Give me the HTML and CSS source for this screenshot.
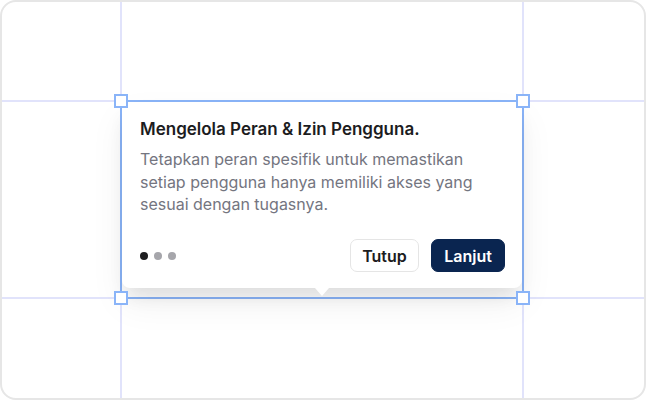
FILE: index.html
```html
<!DOCTYPE html>
<html lang="id">
<head>
<meta charset="utf-8">
<link rel="stylesheet" href="styles.css">
</head>
<body>
<div class="frame">
  <div class="guide guide-v guide-v1"></div>
  <div class="guide guide-v guide-v2"></div>
  <div class="guide guide-h guide-h1"></div>
  <div class="guide guide-h guide-h2"></div>
  <div class="selection">
    <div class="card">
      <h2 class="title">Mengelola Peran &amp; Izin Pengguna.</h2>
      <p class="desc">Tetapkan peran spesifik untuk memastikan setiap pengguna hanya memiliki akses yang sesuai dengan tugasnya.</p>
      <div class="footer">
        <div class="dots">
          <span class="dot active"></span>
          <span class="dot"></span>
          <span class="dot"></span>
        </div>
        <div class="actions">
          <button class="btn btn-ghost">Tutup</button>
          <button class="btn btn-primary">Lanjut</button>
        </div>
      </div>
      <span class="arrow"></span>
    </div>
    <span class="handle h-tl"></span>
    <span class="handle h-tr"></span>
    <span class="handle h-bl"></span>
    <span class="handle h-br"></span>
  </div>
</div>
</body>
</html>
```
FILE: styles.css
```css
* { box-sizing: border-box; }
html, body { margin: 0; padding: 0; background: #ffffff; }
body { font-family: Inter, "Noto Sans", sans-serif; }

.frame {
  position: relative;
  width: 646px;
  height: 400px;
  border: 2px solid #e6e6e6;
  border-radius: 16px;
  overflow: hidden;
  background: #ffffff;
  display: grid;
  grid-template-columns: 118px 404px 1fr;
  grid-template-rows: 98px 199px 1fr;
}

.guide { position: absolute; background: #e1e3fb; z-index: 2; }
.guide-v { top: 0; bottom: 0; width: 2px; }
.guide-h { left: 0; right: 0; height: 2px; }
.guide-v1 { left: 118px; }
.guide-v2 { left: 520px; }
.guide-h1 { top: 98px; }
.guide-h2 { top: 295px; }

.selection {
  grid-column: 2;
  grid-row: 2;
  position: relative;
  border: 2px solid #8ab4f8;
  z-index: 3;
  display: flex;
  flex-direction: column;
}

.card {
  position: relative;
  background: #ffffff;
  height: 186px;
  border-radius: 0 0 8px 8px;
  padding: 16px 17px 16px 18px;
  box-shadow: 0 12px 18px -4px rgba(0, 0, 0, 0.09), 0 16px 36px rgba(0, 0, 0, 0.06);
  display: flex;
  flex-direction: column;
}

.title {
  margin: 0;
  font-size: 17px;
  line-height: 22px;
  font-weight: 600;
  color: #1c1c1e;
}

.desc {
  margin: 8px 0 0;
  font-size: 16px;
  line-height: 22.5px;
  color: #74757f;
}

.footer {
  margin-top: auto;
  display: flex;
  align-items: center;
  justify-content: space-between;
}

.dots { display: flex; gap: 6px; padding-left: 0; }
.dot { width: 8px; height: 8px; border-radius: 50%; background: #a6a6ab; }
.dot.active { background: #1e1e20; }

.actions { display: flex; gap: 12px; }

.btn {
  font-family: Inter, "Noto Sans", sans-serif;
  font-size: 16px;
  font-weight: 600;
  height: 33px;
  border-radius: 7px;
  padding: 0 10px;
  cursor: pointer;
}
.btn-ghost {
  background: #ffffff;
  color: #1c1c1e;
  border: 1px solid #e5e5e5;
  width: 69px;
}
.btn-primary {
  background: #0a2550;
  color: #ffffff;
  border: 1px solid #0a2550;
  width: 74px;
}

.arrow {
  position: absolute;
  left: 193px;
  bottom: -8px;
  width: 0;
  height: 0;
  border-left: 7px solid transparent;
  border-right: 7px solid transparent;
  border-top: 8px solid #ffffff;
}

.handle {
  position: absolute;
  width: 14px;
  height: 14px;
  background: #ffffff;
  border: 2px solid #8ab4f8;
  z-index: 4;
}
.h-tl { left: -8px; top: -8px; }
.h-tr { right: -8px; top: -8px; }
.h-bl { left: -8px; bottom: -8px; }
.h-br { right: -8px; bottom: -8px; }
```
